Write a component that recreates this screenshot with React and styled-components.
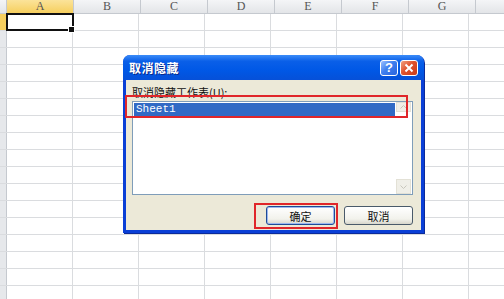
import React from 'react';
import styled, { createGlobalStyle } from 'styled-components';

const GlobalStyle = createGlobalStyle`
  html, body { margin: 0; padding: 0; background: #fff; overflow: hidden; }
  body { width: 504px; height: 299px; font-family: "Noto Sans CJK SC", "Liberation Sans", sans-serif; }
`;

const COLS = ['A', 'B', 'C', 'D', 'E', 'F', 'G', ''];
const ROWS = 17;

const Page = styled.div`
  position: relative;
  width: 504px;
  height: 299px;
  overflow: hidden;
`;

const Sheet = styled.div`
  display: flex;
  flex-direction: column;
`;

const HeaderRow = styled.div`
  display: flex;
  height: 13px;
  background: linear-gradient(#f4f5f7, #e3e5e8);
  border-bottom: 1px solid #c5c9cf;
`;

const Corner = styled.div`
  width: 6px;
  flex: none;
  border-right: 1px solid #c5c9cf;
`;

const ColHeader = styled.div`
  width: 66px;
  flex: none;
  border-right: 1px solid #c5c9cf;
  display: flex;
  align-items: center;
  justify-content: center;
  font-family: "Liberation Serif", serif;
  font-size: 12px;
  color: #555;
  background: ${p => (p.active ? 'linear-gradient(#fbe39a, #f6cf5e)' : 'transparent')};
`;

const Row = styled.div`
  display: flex;
  height: 16px;
  border-bottom: 1px solid #dadcdf;
`;

const RowHeader = styled.div`
  width: 6px;
  flex: none;
  border-right: 1px solid #c5c9cf;
  background: ${p => (p.active ? '#f6cf5e' : '#e6e8eb')};
`;

const Cell = styled.div`
  width: 66px;
  flex: none;
  border-right: 1px solid #dadcdf;
  position: relative;
  box-sizing: border-box;
  ${p => p.selected && `
    outline: 2px solid #111;
    outline-offset: -1px;
    z-index: 1;
  `}
`;

const FillHandle = styled.span`
  position: absolute;
  right: -3px;
  bottom: -3px;
  width: 5px;
  height: 5px;
  background: #111;
  border: 1px solid #fff;
`;

const Dialog = styled.div`
  position: absolute;
  left: 123px;
  top: 55px;
  width: 301px;
  height: 178px;
  box-sizing: border-box;
  background: #0a3fd6;
  border-radius: 7px 7px 0 0;
  padding: 0 3px 3px;
  display: flex;
  flex-direction: column;
  box-shadow: 1px 1px 0 #0b2a9a;
`;

const TitleBar = styled.div`
  height: 25px;
  flex: none;
  border-radius: 7px 7px 0 0;
  margin: 0 -3px;
  padding: 0 6px 0 6px;
  background: linear-gradient(#3b8cf8 0%, #0a5fe8 25%, #0058e6 60%, #0650d8 100%);
  display: flex;
  align-items: center;
  gap: 2px;
`;

const Title = styled.div`
  flex: 1;
  color: #fff;
  font-weight: bold;
  font-size: 12px;
  text-shadow: 1px 1px 0 #0a2a8a;
  letter-spacing: 0.5px;
`;

const CapButton = styled.div`
  width: 18px;
  height: 16px;
  box-sizing: border-box;
  border: 1px solid #fff;
  border-radius: 3px;
  background: ${p => (p.close ? 'linear-gradient(135deg, #f0a080, #e0522d 45%, #c93b18)' : 'linear-gradient(135deg, #9cc0ff, #3e7ff0 45%, #2a63dc)')};
  color: #fff;
  font-family: "Liberation Sans", sans-serif;
  font-weight: bold;
  font-size: 13px;
  display: flex;
  align-items: center;
  justify-content: center;
  line-height: 1;
`;

const Body = styled.div`
  flex: 1;
  min-height: 0;
  background: #ece9d8;
  padding: 5px 8px 5px 6px;
  display: flex;
  flex-direction: column;
`;

const Label = styled.div`
  font-size: 11px;
  color: #111;
  height: 14px;
  line-height: 14px;
  margin-bottom: 2px;
`;

const ListBox = styled.div`
  position: relative;
  height: 94px;
  flex: none;
  box-sizing: border-box;
  background: #fff;
  border: 1px solid #7f9db9;
  padding: 1px 17px 1px 1px;
`;

const ListItem = styled.div`
  height: 13px;
  line-height: 13px;
  background: #316ac5;
  color: #fff;
  font-family: "Liberation Mono", monospace;
  font-size: 11px;
  padding-left: 2px;
`;

const ScrollBar = styled.div`
  position: absolute;
  right: 0;
  top: 0;
  bottom: 0;
  width: 16px;
  display: flex;
  flex-direction: column;
  justify-content: space-between;
`;

const ScrollArrow = styled.div`
  width: 15px;
  height: ${p => p.small ? '10px' : '15px'};
  background: #f0efe8;
  border: 1px solid #e3e1d6;
  box-sizing: border-box;
  display: flex;
  align-items: center;
  justify-content: center;
`;

const Buttons = styled.div`
  display: flex;
  justify-content: flex-end;
  gap: 9px;
  margin-top: 11px;
`;

const Button = styled.div`
  width: 69px;
  height: 19px;
  box-sizing: border-box;
  border: 1px solid ${p => (p.primary ? '#1e4b96' : '#4a5a6a')};
  border-radius: 3px;
  background: linear-gradient(#ffffff, #f2f2ec 70%, #d8d6cc);
  box-shadow: ${p => (p.primary ? 'inset 0 0 0 1px #9cb8f0' : 'none')};
  font-size: 11px;
  color: #111;
  display: flex;
  align-items: center;
  justify-content: center;
`;

const RedBox = styled.div`
  position: absolute;
  border: 2px solid #e0262a;
  pointer-events: none;
`;

export default function App() {
  return (
    <Page>
      <GlobalStyle />
      <Sheet>
        <HeaderRow>
          <Corner />
          {COLS.map((c, i) => (
            <ColHeader key={i} active={c === 'A'}>{c}</ColHeader>
          ))}
        </HeaderRow>
        {Array.from({ length: ROWS }).map((_, r) => (
          <Row key={r}>
            <RowHeader active={r === 0} />
            {COLS.map((c, i) => (
              <Cell key={i} selected={r === 0 && i === 0}>
                {r === 0 && i === 0 && <FillHandle />}
              </Cell>
            ))}
          </Row>
        ))}
      </Sheet>

      <Dialog>
        <TitleBar>
          <Title>取消隐藏</Title>
          <CapButton>?</CapButton>
          <CapButton close>
            <svg width="10" height="10" viewBox="0 0 10 10">
              <path d="M1.5 1.5 L8.5 8.5 M8.5 1.5 L1.5 8.5" stroke="#fff" strokeWidth="2" />
            </svg>
          </CapButton>
        </TitleBar>
        <Body>
          <Label>取消隐藏工作表(U):</Label>
          <ListBox>
            <ListItem>Sheet1</ListItem>
            <ScrollBar>
              <ScrollArrow small>
                <svg width="7" height="4" viewBox="0 0 7 4">
                  <path d="M0.5 3.5 L3.5 0.5 L6.5 3.5" stroke="#c8c6bc" fill="none" />
                </svg>
              </ScrollArrow>
              <ScrollArrow>
                <svg width="7" height="4" viewBox="0 0 7 4">
                  <path d="M0.5 0.5 L3.5 3.5 L6.5 0.5" stroke="#c8c6bc" fill="none" />
                </svg>
              </ScrollArrow>
            </ScrollBar>
          </ListBox>
          <Buttons>
            <Button primary>确定</Button>
            <Button>取消</Button>
          </Buttons>
        </Body>
      </Dialog>

      <RedBox style={{ left: 125, top: 95, width: 279, height: 19 }} />
      <RedBox style={{ left: 254, top: 203, width: 80, height: 22 }} />
    </Page>
  );
}
